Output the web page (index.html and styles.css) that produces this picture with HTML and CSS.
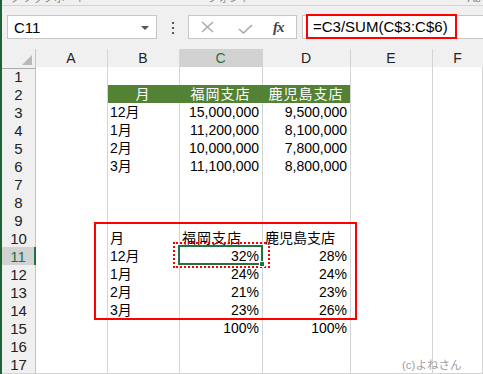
FILE: index.html
```html
<!DOCTYPE html>
<html lang="ja">

<head>
    <meta charset="UTF-8">
    <meta name="viewport" content="width=device-width, initial-scale=1.0">
    <title>構成比</title>
    <link rel="stylesheet" href="styles.css">
</head>

<body>
    <div class="ribbon-edge">
        <span class="ribbon-label">クリップボード</span>
        <span class="ribbon-label label-mid">フォント</span>
        <span class="ribbon-label label-end">Ab</span>
    </div>

    <div class="formula-bar">
        <div class="name-box">C11<span class="drop"></span></div>
        <div class="grip">
            <svg width="4" height="14" viewBox="0 0 4 14">
                <rect x="1" y="1" width="2" height="2" fill="#555" />
                <rect x="1" y="6" width="2" height="2" fill="#555" />
                <rect x="1" y="11" width="2" height="2" fill="#555" />
            </svg>
        </div>
        <div class="fx-box">
            <svg class="cancel" width="13" height="12" viewBox="0 0 13 12">
                <path d="M1 1 L12 11 M12 1 L1 11" stroke="#a8a8a8" stroke-width="1.4" fill="none" />
            </svg>
            <svg class="enter" width="15" height="10" viewBox="0 0 15 10">
                <path d="M1 5 L5.5 9 L14 1" stroke="#a8a8a8" stroke-width="1.6" fill="none" />
            </svg>
            <span class="fx">fx</span>
        </div>
        <div class="formula-input"><span class="formula-hl">=C3/SUM(C$3:C$6)</span></div>
    </div>

    <div class="sheet">
        <div class="row head">
            <div class="c corner"></div>
            <div class="c">A</div>
            <div class="c">B</div>
            <div class="c sel-col">C</div>
            <div class="c">D</div>
            <div class="c">E</div>
            <div class="c">F</div>
        </div>
        <div class="row">
            <div class="c rh">1</div><div class="c"></div><div class="c"></div><div class="c"></div><div class="c"></div><div class="c"></div><div class="c"></div>
        </div>
        <div class="row">
            <div class="c rh">2</div><div class="c"></div>
            <div class="c fill">月</div><div class="c fill">福岡支店</div><div class="c fill fill-end">鹿児島支店</div>
            <div class="c"></div><div class="c"></div>
        </div>
        <div class="row">
            <div class="c rh">3</div><div class="c"></div><div class="c">12月</div><div class="c num">15,000,000</div><div class="c num">9,500,000</div><div class="c"></div><div class="c"></div>
        </div>
        <div class="row">
            <div class="c rh">4</div><div class="c"></div><div class="c">1月</div><div class="c num">11,200,000</div><div class="c num">8,100,000</div><div class="c"></div><div class="c"></div>
        </div>
        <div class="row">
            <div class="c rh">5</div><div class="c"></div><div class="c">2月</div><div class="c num">10,000,000</div><div class="c num">7,800,000</div><div class="c"></div><div class="c"></div>
        </div>
        <div class="row">
            <div class="c rh">6</div><div class="c"></div><div class="c">3月</div><div class="c num">11,100,000</div><div class="c num">8,800,000</div><div class="c"></div><div class="c"></div>
        </div>
        <div class="row">
            <div class="c rh">7</div><div class="c"></div><div class="c"></div><div class="c"></div><div class="c"></div><div class="c"></div><div class="c"></div>
        </div>
        <div class="row">
            <div class="c rh">8</div><div class="c"></div><div class="c"></div><div class="c"></div><div class="c"></div><div class="c"></div><div class="c"></div>
        </div>
        <div class="row">
            <div class="c rh">9</div><div class="c"></div><div class="c"></div><div class="c"></div><div class="c"></div><div class="c"></div><div class="c"></div>
        </div>
        <div class="row">
            <div class="c rh">10</div><div class="c"></div><div class="c">月</div><div class="c label">福岡支店</div><div class="c">鹿児島支店</div><div class="c"></div><div class="c"></div>
        </div>
        <div class="row">
            <div class="c rh sel-row">11</div><div class="c"></div><div class="c">12月</div><div class="c num">32%</div><div class="c num">28%</div><div class="c"></div><div class="c"></div>
        </div>
        <div class="row">
            <div class="c rh">12</div><div class="c"></div><div class="c">1月</div><div class="c num">24%</div><div class="c num">24%</div><div class="c"></div><div class="c"></div>
        </div>
        <div class="row">
            <div class="c rh">13</div><div class="c"></div><div class="c">2月</div><div class="c num">21%</div><div class="c num">23%</div><div class="c"></div><div class="c"></div>
        </div>
        <div class="row">
            <div class="c rh">14</div><div class="c"></div><div class="c">3月</div><div class="c num">23%</div><div class="c num">26%</div><div class="c"></div><div class="c"></div>
        </div>
        <div class="row">
            <div class="c rh">15</div><div class="c"></div><div class="c"></div><div class="c num">100%</div><div class="c num">100%</div><div class="c"></div><div class="c"></div>
        </div>
        <div class="row">
            <div class="c rh">16</div><div class="c"></div><div class="c"></div><div class="c"></div><div class="c"></div><div class="c"></div><div class="c"></div>
        </div>
        <div class="row">
            <div class="c rh">17</div><div class="c"></div><div class="c"></div><div class="c"></div><div class="c"></div><div class="c"></div><div class="c"></div>
        </div>

        <!-- overlays -->
        <div class="mark-range"></div>
        <div class="mark-copy"></div>
        <div class="active-cell"></div>
        <div class="fill-handle"></div>
        <div class="credit">(c)よねさん</div>
    </div>
</body>

</html>
```

FILE: styles.css
```css
*,
*::before,
*::after {
    box-sizing: border-box;
}

html,
body {
    margin: 0;
    height: 100%;
}

body {
    background: #f0f0f0;
    border-left: 2px solid #1d6336;
    overflow: hidden;
    font-family: "Liberation Sans", "Noto Sans CJK JP", sans-serif;
    font-size: 14px;
    color: #000;
}

/* bottom of the ribbon, cut off */
.ribbon-edge {
    height: 6px;
    border-bottom: 1px solid #d5d5d5;
    overflow: hidden;
    display: flex;
    padding-left: 8px;
}

.ribbon-label {
    font-size: 11px;
    line-height: 12px;
    margin-top: -8px;
    color: #8a8a8a;
}

.label-mid {
    margin-left: 120px;
}

.label-end {
    margin-left: auto;
    margin-right: 2px;
}

.formula-bar {
    display: flex;
    align-items: center;
    height: 24px;
    margin-top: 9px;
    padding-left: 5px;
}

.name-box {
    width: 150px;
    height: 24px;
    background: #fff;
    border: 1px solid #c6c6c6;
    display: flex;
    align-items: center;
    justify-content: space-between;
    padding: 0 7px 0 6px;
    font-size: 15px;
}

.drop {
    border-left: 4px solid transparent;
    border-right: 4px solid transparent;
    border-top: 4px solid #555;
    margin-top: 1px;
}

.grip {
    width: 31px;
    display: flex;
    justify-content: center;
    padding-top: 1px;
}

.fx-box {
    width: 109px;
    height: 24px;
    background: #fff;
    border: 1px solid #c6c6c6;
    display: flex;
    align-items: center;
    padding-left: 12px;
}

.enter {
    margin-left: 24px;
    margin-top: 3px;
}

.fx {
    margin-left: 20px;
    font-family: "Liberation Serif", serif;
    font-style: italic;
    font-weight: bold;
    font-size: 15px;
    color: #444;
    letter-spacing: -1px;
}

.formula-input {
    flex: 1;
    height: 24px;
    margin-left: 5px;
    background: #fff;
    border: 1px solid #c6c6c6;
    border-right: none;
    padding-left: 3px;
}

.formula-hl {
    display: flex;
    align-items: center;
    width: 151px;
    height: 25px;
    margin-top: -2px;
    border: 2px solid #f00;
    padding-left: 5px;
    font-size: 15px;
}

/* grid */
.sheet {
    position: relative;
    margin-top: 10px;
}

.row {
    display: grid;
    grid-template-columns: 34px 72px 72px 83px 88px 82px 1fr;
    height: 18px;
}

.c {
    background: #fff;
    border-right: 1px solid #d4d4d4;
    border-bottom: 1px solid #d4d4d4;
    line-height: 17px;
    padding: 1px 3px 0 2px;
    white-space: nowrap;
}

.num {
    text-align: right;
}

.label {
    letter-spacing: 1px;
}

.head .c {
    background: #f0f0f0;
    text-align: center;
    border-bottom-color: #ababab;
    color: #222;
}

.head .c:last-child {
    border-right: none;
}

.corner {
    position: relative;
    border-right-color: #c4c4c4;
}

.corner::after {
    content: '';
    position: absolute;
    right: 3px;
    bottom: 3px;
    border-left: 10px solid transparent;
    border-bottom: 10px solid #b9b9b9;
}

.head .sel-col {
    background: #d2d2d2;
    color: #217346;
    border-bottom: 2px solid #217346;
}

.rh {
    background: #f0f0f0;
    text-align: center;
    color: #222;
    border-right-color: #c4c4c4;
    padding: 1px 0 0;
    font-size: 15px;
}

.rh.sel-row {
    background: #d2d2d2;
    color: #217346;
    border-right: 2px solid #217346;
}

.fill {
    background: #548235;
    color: #fff;
    text-align: center;
    border-right-color: #548235;
    letter-spacing: 1px;
}

.fill-end {
    border-right-color: #d4d4d4;
}

.mark-range {
    position: absolute;
    left: 92px;
    top: 173px;
    width: 263px;
    height: 98px;
    border: 2px solid #f00;
}

.mark-copy {
    position: absolute;
    left: 171px;
    top: 193px;
    width: 97px;
    height: 26px;
    border: 2px dotted #f00;
}

.active-cell {
    position: absolute;
    left: 176px;
    top: 196px;
    width: 85px;
    height: 20px;
    border: 2px solid #217346;
}

.fill-handle {
    position: absolute;
    left: 257px;
    top: 212px;
    width: 6px;
    height: 6px;
    background: #217346;
    border: 1px solid #fff;
}

.credit {
    position: absolute;
    left: 400px;
    top: 307px;
    font-size: 11.5px;
    color: #a0a0a0;
}
```
